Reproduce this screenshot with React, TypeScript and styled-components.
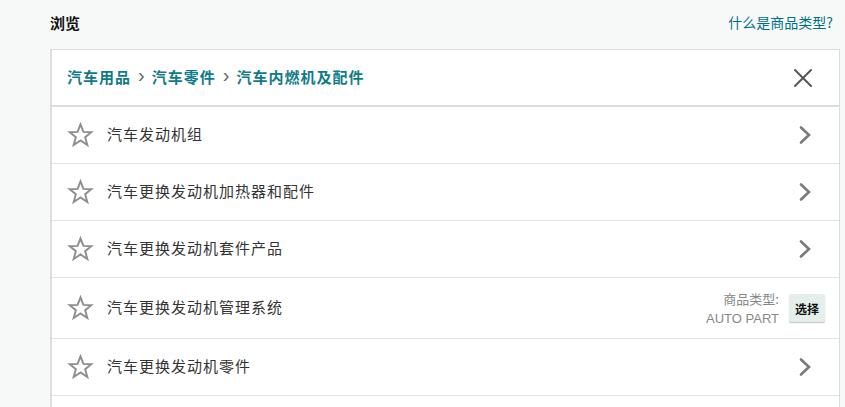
import React from "react";
import styled, { createGlobalStyle } from "styled-components";

const Global = createGlobalStyle`
  html, body { margin: 0; padding: 0; background: #f7f8f8; }
  body { font-family: "Noto Sans CJK SC", "Noto Sans", "Liberation Sans", sans-serif; color: #333; }
`;

const Page = styled.div`
  padding: 0 5px 0 50px;
  box-sizing: border-box;
  width: 845px;
`;

const Header = styled.div`
  display: flex;
  align-items: center;
  justify-content: space-between;
  height: 49px;
`;

const Title = styled.h2`
  margin: 0;
  font-size: 15px;
  font-weight: 700;
  color: #111;
  padding-bottom: 5px;
`;

const HelpLink = styled.a`
  font-size: 14px;
  color: #007185;
  text-decoration: none;
  margin-right: 7px;
  padding-bottom: 5px;
`;

const Panel = styled.div`
  background: #fff;
  border: 1px solid #dcdcdc;
  border-left-width: 2px;
  width: 790px;
  box-sizing: border-box;
`;

const Crumbs = styled.div`
  display: flex;
  align-items: center;
  height: 55px;
  padding: 0 26px 0 15px;
  border-bottom: 2px solid #dcdcdc;
`;

const CrumbText = styled.div`
  flex: 1;
  font-size: 15px;
  letter-spacing: 1px;
  font-weight: 700;
  color: #0f7b87;
  display: flex;
  align-items: center;
  gap: 6px;
  padding-bottom: 2px;
`;

const Sep = styled.span`
  color: #666;
  font-family: "Liberation Sans", sans-serif;
  font-weight: 400;
  font-size: 20px;
  letter-spacing: 0;
  padding: 0 1px 3px;
`;

const Row = styled.div<{ $tall?: boolean }>`
  display: flex;
  align-items: center;
  height: ${(p) => (p.$tall ? 60 : 56)}px;
  padding: 0 27px 0 14px;
  border-bottom: 1px solid #e3e3e3;
`;

const StarWrap = styled.span`
  width: 28px;
  height: 28px;
  display: flex;
  align-items: center;
  justify-content: center;
  margin-right: 13px;
`;

const Label = styled.span`
  flex: 1;
  font-size: 15px;
  letter-spacing: 1px;
  color: #333;
  padding-bottom: 4px;
`;

const TypeInfo = styled.div`
  text-align: right;
  font-size: 13px;
  line-height: 19px;
  color: #888;
  margin-right: 10px;
`;

const TypeValue = styled.span`
  font-family: "Liberation Sans", Arial, sans-serif;
`;

const SelectButton = styled.button`
  font-family: inherit;
  font-size: 12px;
  font-weight: 700;
  color: #111;
  background: #e4efec;
  border: none;
  border-radius: 2px;
  box-shadow: 0 1px 1px rgba(0, 0, 0, 0.25);
  padding: 0 6px;
  height: 28px;
  margin-right: -13px;
`;

const Star = () => (
  <svg width="27" height="26" viewBox="0 0 24 24" fill="none" stroke="#8e8e8e" strokeWidth="1.8" strokeLinejoin="miter">
    <polygon points="12,2.2 14.7,9.1 22,9.4 16.3,14 18.3,21.2 12,17.1 5.7,21.2 7.7,14 2,9.4 9.3,9.1" />
  </svg>
);

const Chevron = () => (
  <svg width="14" height="20" viewBox="0 0 14 20" fill="none" stroke="#7a7a7a" strokeWidth="2.6" strokeLinecap="round">
    <polyline points="3,2.5 11,10 3,17.5" />
  </svg>
);

const Close = () => (
  <svg width="20" height="20" viewBox="0 0 20 20" stroke="#555" strokeWidth="2" strokeLinecap="round">
    <line x1="2" y1="2" x2="18" y2="18" />
    <line x1="18" y1="2" x2="2" y2="18" />
  </svg>
);

const items = [
  { label: "汽车发动机组" },
  { label: "汽车更换发动机加热器和配件" },
  { label: "汽车更换发动机套件产品" },
  { label: "汽车更换发动机管理系统", type: "AUTO PART" },
  { label: "汽车更换发动机零件" },
  { label: "" },
];

export default function App() {
  return (
    <>
      <Global />
      <Page>
        <Header>
          <Title>浏览</Title>
          <HelpLink href="#">什么是商品类型?</HelpLink>
        </Header>
        <Panel>
          <Crumbs>
            <CrumbText>
              <span>汽车用品</span>
              <Sep>›</Sep>
              <span>汽车零件</span>
              <Sep>›</Sep>
              <span>汽车内燃机及配件</span>
            </CrumbText>
            <Close />
          </Crumbs>
          {items.map((it, i) => (
            <Row key={i} $tall={!!it.type}>
              <StarWrap>
                <Star />
              </StarWrap>
              <Label>{it.label}</Label>
              {it.type ? (
                <>
                  <TypeInfo>
                    商品类型:
                    <br />
                    <TypeValue>{it.type}</TypeValue>
                  </TypeInfo>
                  <SelectButton>选择</SelectButton>
                </>
              ) : (
                <Chevron />
              )}
            </Row>
          ))}
        </Panel>
      </Page>
    </>
  );
}
